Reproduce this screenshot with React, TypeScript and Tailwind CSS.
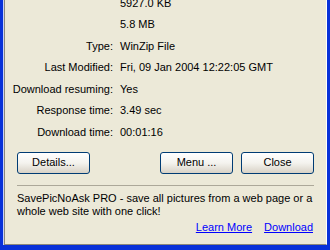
const rows = [
  { label: "", value: "5927.0 KB" },
  { label: "", value: "5.8 MB" },
  { label: "Type:", value: "WinZip File" },
  { label: "Last Modified:", value: "Fri, 09 Jan 2004 12:22:05 GMT" },
  { label: "Download resuming:", value: "Yes" },
  { label: "Response time:", value: "3.49 sec" },
  { label: "Download time:", value: "00:01:16" },
];

function XpButton({ children }: { children: React.ReactNode }) {
  return (
    <button className="w-[73px] h-[22px] rounded-[3px] border border-[#003C74] bg-gradient-to-b from-white via-[#F4F3EE] to-[#D8D2C6] text-[11px] text-black leading-none">
      {children}
    </button>
  );
}

export default function App() {
  return (
    <div className="w-[330px] h-[250px] overflow-hidden bg-[#0831D9] font-['Liberation_Sans',Arial,sans-serif] text-[11px] text-black">
      <div className="h-[245px] ml-[3px] mr-[3px] border-l border-l-[#C9D3F7] bg-[#0831D9]">
        <div className="h-full flex flex-col border-l border-b border-[#8A877C] border-r border-r-white bg-[#ECE9D8]">

          {/* ── Info rows ── */}
          <div className="-mt-[8px] flex flex-col">
            {rows.map((r) => (
              <div key={r.value} className="h-[21.5px] flex items-center">
                <span className="w-[108px] text-right whitespace-nowrap">{r.label}</span>
                <span className="ml-[7px] whitespace-nowrap">{r.value}</span>
              </div>
            ))}
          </div>

          {/* ── Buttons ── */}
          <div className="mt-[9px] flex items-center pl-[12px] pr-[12px]">
            <XpButton>Details...</XpButton>
            <div className="flex-1" />
            <XpButton>Menu ...</XpButton>
            <div className="w-[8px]" />
            <XpButton>Close</XpButton>
          </div>

          {/* ── Separator ── */}
          <div className="mt-[11px] mx-[12px] h-px bg-[#ACA899]" />

          {/* ── Promo ── */}
          <p className="mt-[6px] px-[12px] leading-[13px]">
            SavePicNoAsk PRO - save all pictures from a web page or a whole web site with one click!
          </p>
          <div className="mt-[1px] flex justify-end gap-[12px] pr-[13px]">
            <a href="#" className="text-[#0000FF] underline">Learn More</a>
            <a href="#" className="text-[#0000FF] underline">Download</a>
          </div>
        </div>
      </div>
    </div>
  );
}
